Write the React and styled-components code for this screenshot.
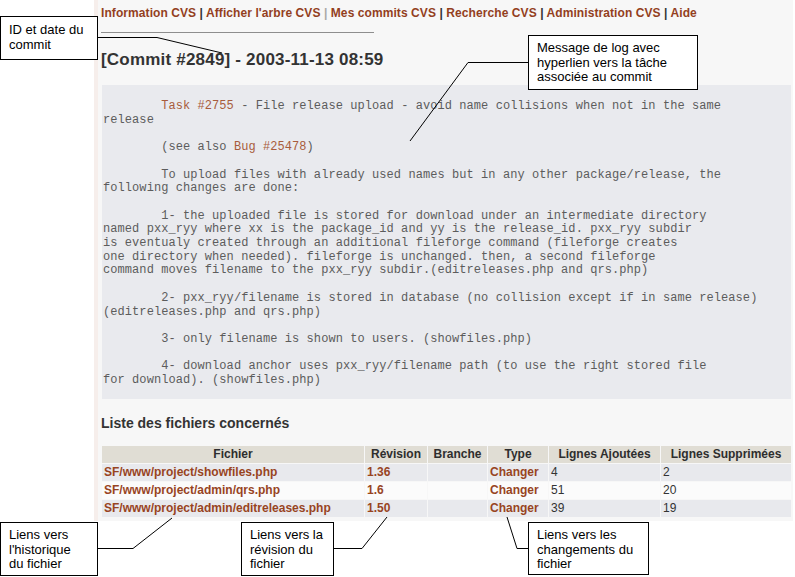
import React from "react";
import styled, { createGlobalStyle } from "styled-components";

const GlobalStyle = createGlobalStyle`
  html, body { margin: 0; padding: 0; background: #ffffff; }
  body { font-family: "Liberation Sans", Arial, sans-serif; color: #333; }
  #root { width: 795px; min-height: 577px; }
`;

const Page = styled.div`
  position: relative;
  display: flex;
  align-items: flex-start;
  width: 795px;
  height: 577px;
  overflow: hidden;
  background: #ffffff;
`;

const Gutter = styled.div`
  flex: 0 0 94px;
`;

const Main = styled.main`
  flex: 0 0 699px;
  box-sizing: border-box;
  border-left: 4px solid #f6eeeb;
  background: #f7f7f7;
  padding: 6px 1px 3px 3px;
`;

const Nav = styled.nav`
  font-size: 12px;
  font-weight: bold;
  line-height: 15px;
  letter-spacing: 0.08px;
  white-space: nowrap;
`;

const NavLink = styled.a`
  color: #933f1e;
  text-decoration: none;
`;

const Sep = styled.span`
  color: ${(p) => (p.$light ? "#a8a8a8" : "#333")};
`;

const Rule = styled.div`
  width: 273px;
  height: 1px;
  margin-top: 11px;
  background: #8e8e8e;
`;

const Title = styled.h1`
  margin: 17px 0 0;
  font-size: 17px;
  line-height: 20px;
  font-weight: bold;
  letter-spacing: 0.2px;
  color: #333;
`;

const LogBox = styled.pre`
  margin: 15px 1px 0 1px;
  padding: 15px 1px 11px;
  background: #e9eaee;
  font-family: "Liberation Mono", "Courier New", monospace;
  font-size: 12px;
  letter-spacing: 0.07px;
  line-height: 13.7px;
  color: #5c5c5c;
  white-space: pre;
  overflow: hidden;
`;

const LogLink = styled.a`
  color: #a85c3c;
  text-decoration: none;
`;

const SectionTitle = styled.h2`
  margin: 16px 0 0;
  font-size: 14px;
  line-height: 17px;
  font-weight: bold;
  color: #333;
`;

const FileTable = styled.table`
  margin-top: 13px;
  width: 691px;
  table-layout: fixed;
  border-collapse: separate;
  border-spacing: 1px;
  font-size: 12px;
`;

const HeadCell = styled.th`
  box-sizing: border-box;
  width: ${(p) => p.$w}px;
  height: 17px;
  padding: 0 2px;
  background: #e0ddd4;
  color: #2e2e2e;
  font-weight: bold;
  text-align: center;
  white-space: nowrap;
`;

const Row = styled.tr`
  background: ${(p) => (p.$alt ? "#fbfbfb" : "#e8e9ed")};
`;

const Cell = styled.td`
  height: 17px;
  padding: 0 3px 0 2px;
  color: #333;
  white-space: nowrap;
  line-height: 17px;
`;

const CellLink = styled.a`
  color: #98441f;
  font-weight: bold;
  text-decoration: none;
`;

const Callout = styled.div`
  position: absolute;
  left: ${(p) => p.$x}px;
  top: ${(p) => p.$y}px;
  width: ${(p) => p.$w}px;
  height: ${(p) => p.$h}px;
  box-sizing: border-box;
  border: 1px solid #000;
  background: #ffffff;
  padding: ${(p) => p.$pt}px 0 0 ${(p) => p.$pl}px;
  font-family: "Liberation Sans", Arial, sans-serif;
  font-size: 13px;
  line-height: 14.5px;
  color: #000;
`;

const Leaders = styled.svg`
  position: absolute;
  left: 0;
  top: 0;
  pointer-events: none;
`;

const navItems = [
  "Information CVS",
  "Afficher l'arbre CVS",
  "Mes commits CVS",
  "Recherche CVS",
  "Administration CVS",
  "Aide",
];

const files = [
  { path: "SF/www/project/showfiles.php", rev: "1.36", add: "4", del: "2" },
  { path: "SF/www/project/admin/qrs.php", rev: "1.6", add: "51", del: "20" },
  { path: "SF/www/project/admin/editreleases.php", rev: "1.50", add: "39", del: "19" },
];

const T = "        ";

export default function App() {
  return (
    <>
      <GlobalStyle />
      <Page>
        <Gutter />
        <Main>
          <Nav>
            {navItems.map((item, i) => (
              <React.Fragment key={item}>
                {i > 0 && <Sep $light={i === 2}> | </Sep>}
                <NavLink href="#">{item}</NavLink>
              </React.Fragment>
            ))}
          </Nav>
          <Rule />
          <Title>[Commit #2849] - 2003-11-13 08:59</Title>
          <LogBox>
            {T}<LogLink href="#">Task #2755</LogLink>
            {" - File release upload - avoid name collisions when not in the same\nrelease\n\n"}
            {T}(see also <LogLink href="#">Bug #25478</LogLink>)
            {"\n\n"}
            {T + "To upload files with already used names but in any other package/release, the\nfollowing changes are done:\n\n"}
            {T + "1- the uploaded file is stored for download under an intermediate directory\nnamed pxx_ryy where xx is the package_id and yy is the release_id. pxx_ryy subdir\nis eventualy created through an additional fileforge command (fileforge creates\none directory when needed). fileforge is unchanged. then, a second fileforge\ncommand moves filename to the pxx_ryy subdir.(editreleases.php and qrs.php)\n\n"}
            {T + "2- pxx_ryy/filename is stored in database (no collision except if in same release)\n(editreleases.php and qrs.php)\n\n"}
            {T + "3- only filename is shown to users. (showfiles.php)\n\n"}
            {T + "4- download anchor uses pxx_ryy/filename path (to use the right stored file\nfor download). (showfiles.php)"}
          </LogBox>
          <SectionTitle>Liste des fichiers concernés</SectionTitle>
          <FileTable>
            <thead>
              <tr>
                <HeadCell $w={262}>Fichier</HeadCell>
                <HeadCell $w={62}>Révision</HeadCell>
                <HeadCell $w={59}>Branche</HeadCell>
                <HeadCell $w={60}>Type</HeadCell>
                <HeadCell $w={111}>Lignes Ajoutées</HeadCell>
                <HeadCell $w={130}>Lignes Supprimées</HeadCell>
              </tr>
            </thead>
            <tbody>
              {files.map((f, i) => (
                <Row key={f.path} $alt={i === 1}>
                  <Cell><CellLink href="#">{f.path}</CellLink></Cell>
                  <Cell><CellLink href="#">{f.rev}</CellLink></Cell>
                  <Cell />
                  <Cell><CellLink href="#">Changer</CellLink></Cell>
                  <Cell>{f.add}</Cell>
                  <Cell>{f.del}</Cell>
                </Row>
              ))}
            </tbody>
          </FileTable>
        </Main>

        <Leaders width="795" height="577" viewBox="0 0 795 577">
          <g fill="none" stroke="#000" strokeWidth="1">
            <polyline points="97,37.5 157,37.5 222,53" />
            <polyline points="528,62.5 468,62.5 410,141" />
            <polyline points="97,548.5 133,548.5 172,518" />
            <polyline points="333,548.5 362,548.5 387,517" />
            <polyline points="528,548.5 517,548.5 507,517" />
          </g>
        </Leaders>

        <Callout $x={0} $y={16} $w={98} $h={44} $pt={6} $pl={8}>
          ID et date du<br />commit
        </Callout>
        <Callout $x={528} $y={35} $w={170} $h={55} $pt={5} $pl={8}>
          Message de log avec<br />hyperlien vers la tâche<br />associée au commit
        </Callout>
        <Callout $x={0} $y={522} $w={98} $h={54} $pt={5} $pl={8}>
          Liens vers<br />l'historique<br />du fichier
        </Callout>
        <Callout $x={241} $y={522} $w={93} $h={54} $pt={5} $pl={8}>
          Liens vers la<br />révision du<br />fichier
        </Callout>
        <Callout $x={528} $y={522} $w={121} $h={53} $pt={5} $pl={8}>
          Liens vers les<br />changements du<br />fichier
        </Callout>
      </Page>
    </>
  );
}
